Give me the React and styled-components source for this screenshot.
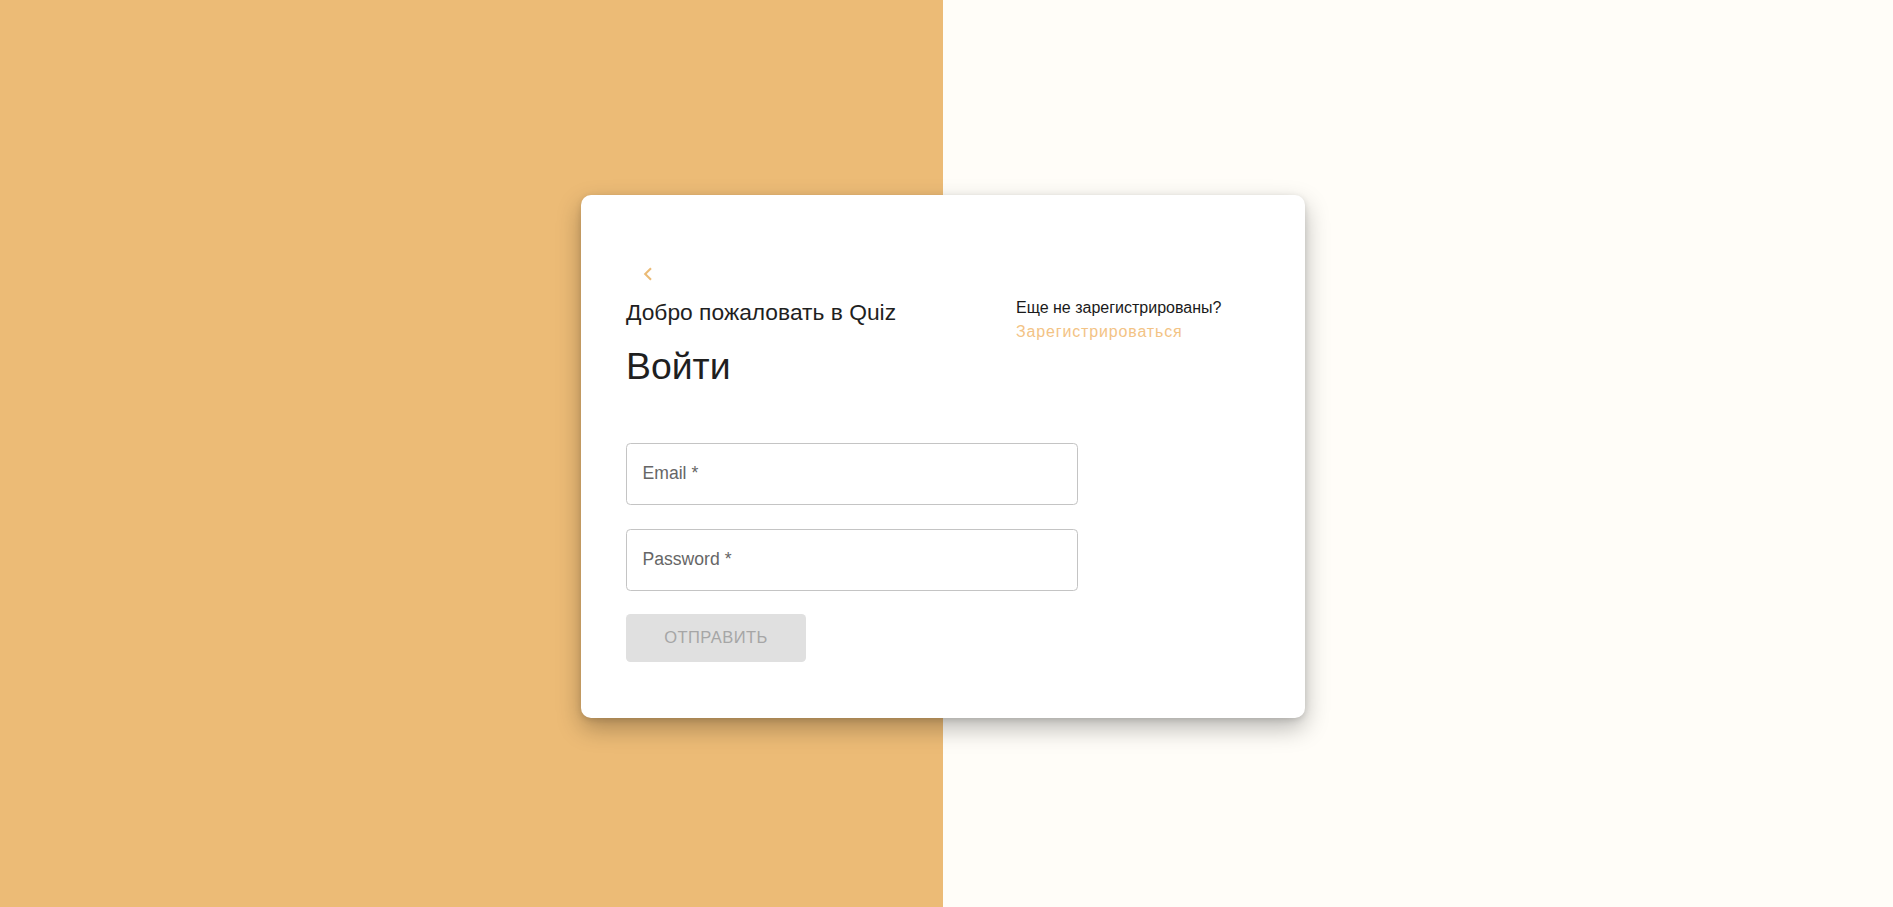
import React from "react";
import styled, { createGlobalStyle } from "styled-components";

const GlobalStyle = createGlobalStyle`
  html, body { margin: 0; padding: 0; }
  body {
    font-family: "Liberation Sans", Arial, sans-serif;
    color: #1f1f1f;
  }
  * { box-sizing: border-box; }
`;

const Page = styled.div`
  position: relative;
  display: grid;
  grid-template-columns: 943px 1fr;
  height: 100vh;
  min-height: 907px;
`;

const Panel = styled.div`
  background: ${(p) => p.$bg};
`;

const Overlay = styled.div`
  position: absolute;
  top: 0;
  left: 0;
  width: 1886px;
  height: 912px;
  display: flex;
  align-items: center;
  justify-content: center;
`;

const Card = styled.div`
  width: 724px;
  background: #ffffff;
  border-radius: 10px;
  padding: 45px 45px 56px;
  box-shadow: 0 10px 24px rgba(0, 0, 0, 0.28), 0 2px 6px rgba(0, 0, 0, 0.12);
  display: flex;
  flex-direction: column;
`;

const BackButton = styled.button`
  width: 40px;
  height: 40px;
  margin: 14px 0 0 2px;
  padding: 0;
  border: none;
  background: transparent;
  border-radius: 50%;
  display: flex;
  align-items: center;
  justify-content: center;
  color: #ebbb76;
  cursor: pointer;
`;

const HeaderRow = styled.div`
  display: grid;
  grid-template-columns: 390px 1fr;
  margin-top: 1px;
`;

const LeftCol = styled.div`
  display: flex;
  flex-direction: column;
`;

const Subtitle = styled.h6`
  margin: 0;
  font-size: 22.8px;
  line-height: 35.2px;
  font-weight: 400;
  color: #1f1f1f;
`;

const Heading = styled.h4`
  margin: 13.6px 0 0;
  font-size: 37.4px;
  line-height: 46.2px;
  font-weight: 400;
  color: #1f1f1f;
`;

const RightCol = styled.div`
  display: flex;
  flex-direction: column;
  padding-top: 1.6px;
`;

const Hint = styled.span`
  font-size: 16px;
  line-height: 24px;
  color: #1a1a1a;
`;

const SignupLink = styled.a`
  font-size: 16px;
  line-height: 24px;
  font-weight: 400;
  letter-spacing: 0.85px;
  color: #f3c385;
  text-decoration: none;
  cursor: pointer;
`;

const Form = styled.form`
  width: 452px;
  margin-top: 53px;
  display: flex;
  flex-direction: column;
  gap: 24px;
`;

const Field = styled.label`
  height: 62px;
  border: 1px solid #c4c4c4;
  border-radius: 4.4px;
  display: flex;
  align-items: center;
  padding: 0 15.5px;
`;

const FieldLabel = styled.span`
  font-size: 17.6px;
  color: #666666;
  margin-top: -1px;
`;

const Submit = styled.button`
  width: 180px;
  height: 48px;
  margin-top: -1px;
  border: none;
  border-radius: 4.4px;
  background: #e0e0e0;
  color: #a6a6a6;
  font-family: "Liberation Sans", Arial, sans-serif;
  font-size: 16.5px;
  letter-spacing: 0.47px;
  text-transform: uppercase;
  padding: 0 0 1px;
`;

const ChevronLeft = () => (
  <svg width="12" height="14" viewBox="0 0 12 14" fill="none">
    <polyline
      points="9,1.2 3.2,7 9,12.8"
      stroke="currentColor"
      strokeWidth="2.1"
      strokeLinecap="butt"
      strokeLinejoin="miter"
    />
  </svg>
);

export default function App() {
  return (
    <>
      <GlobalStyle />
      <Page>
        <Panel $bg="#ecbb76" />
        <Panel $bg="#fffdf8" />
        <Overlay>
          <Card>
            <BackButton type="button" aria-label="Назад">
              <ChevronLeft />
            </BackButton>
            <HeaderRow>
              <LeftCol>
                <Subtitle>Добро пожаловать в Quiz</Subtitle>
                <Heading>Войти</Heading>
              </LeftCol>
              <RightCol>
                <Hint>Еще не зарегистрированы?</Hint>
                <SignupLink>Зарегистрироваться</SignupLink>
              </RightCol>
            </HeaderRow>
            <Form onSubmit={(e) => e.preventDefault()}>
              <Field>
                <FieldLabel>Email *</FieldLabel>
              </Field>
              <Field>
                <FieldLabel>Password *</FieldLabel>
              </Field>
              <Submit type="submit" disabled>
                Отправить
              </Submit>
            </Form>
          </Card>
        </Overlay>
      </Page>
    </>
  );
}
